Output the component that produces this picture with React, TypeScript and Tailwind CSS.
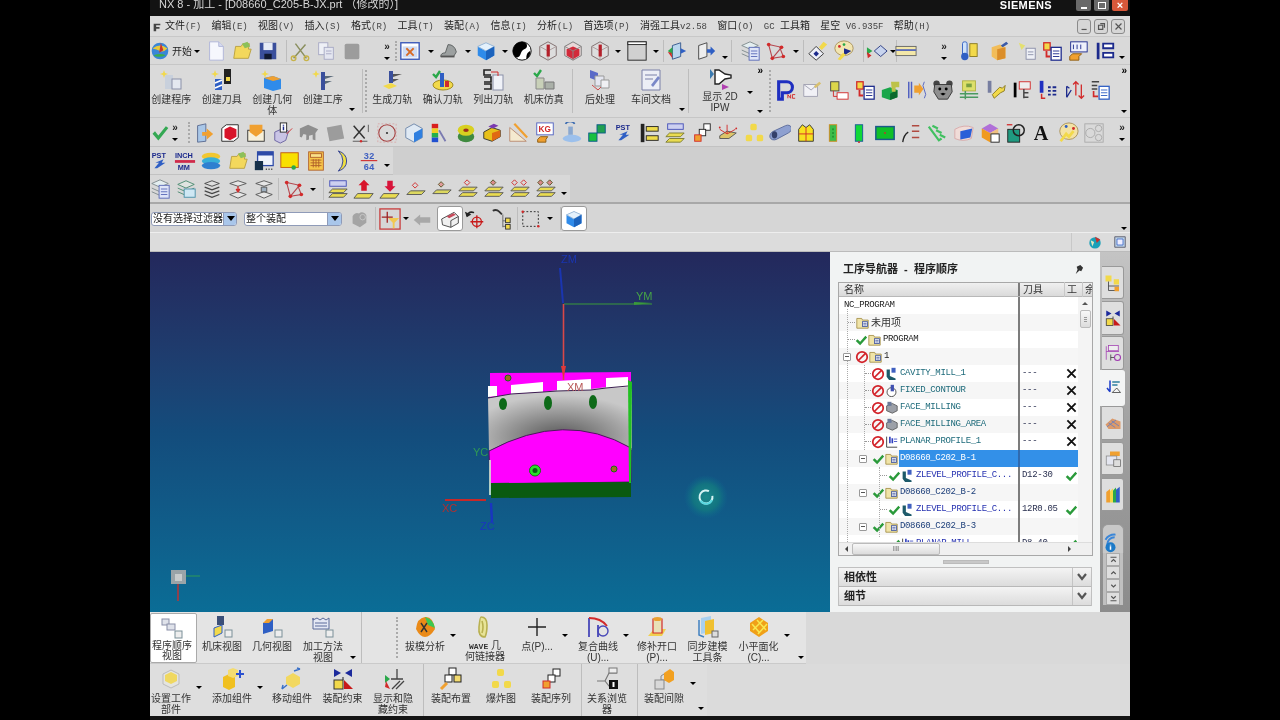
import type { ReactNode } from "react";

const Y = "#f2d94a";
const O = "#f0a030";
const R = "#d22a2a";
const B = "#2f5fc4";
const N = "#1c2a8c";
const G = "#2aa84a";

const icons: Record<string, ReactNode> = {
  ball: (<><circle cx="12" cy="12" r="10" fill="#3a86d8" /><path d="M3 9q9-7 18 0-5 5-9 3-4-2-9-3" fill="#e8c93a" /><path d="M4 17q6 4 15 0-6-3-15 0" fill="#3fae49" /><path d="M13 2l3 9-5 3" fill="#c8342c" /></>),
  doc: (<><path d="M5 2h10l5 5v15H5z" fill="#f6f7fd" stroke="#aeb4d8" /><path d="M15 2v5h5" fill="#d8dcf0" stroke="#aeb4d8" /></>),
  folder: (<><path d="M3 20l2-13h6l2-3h7l-1 6 3 0-3 10z" fill="#f3d85c" stroke="#b9a040" /><path d="M12 4l6-2 3 5-6 2z" fill="#8cc05a" /></>),
  save: (<><rect x="3" y="3" width="18" height="18" fill="#3a4f9c" /><rect x="7" y="3" width="10" height="8" fill="#e6ebf6" /><rect x="8" y="15" width="8" height="6" fill="#101830" /></>),
  scissors: (<><path d="M5 20L18 5M19 20L7 4" stroke="#8a8f5e" strokeWidth="1.6" fill="none" /><circle cx="5" cy="20" r="2.5" fill="none" stroke="#c7b34a" strokeWidth="1.5" /><circle cx="19" cy="20" r="2.5" fill="none" stroke="#c7b34a" strokeWidth="1.5" /></>),
  copy: (<><rect x="4" y="3" width="10" height="13" fill="#eef0f6" stroke="#a7a9c4" /><rect x="10" y="8" width="10" height="13" fill="#e4e6f0" stroke="#a7a9c4" /><path d="M12 12h6M12 15h6" stroke="#a7a9c4" /></>),
  paste: <rect x="4" y="4" width="16" height="17" rx="2" fill="#9c9c9c" />,
  frame: (<><rect x="2" y="3" width="20" height="18" fill="#fff" stroke="#3a58b8" strokeWidth="1.5" /><rect x="4" y="7" width="16" height="12" fill="#cfdcf4" /><path d="M8 9l8 8M16 9l-8 8" stroke="#d86a24" strokeWidth="2" /></>),
  press: (<><path d="M3 18q0-4 5-4l3-9q7 0 9 8l-3 5z" fill="#9ca0a0" stroke="#5b5f5f" /><path d="M3 18h15" stroke="#555" strokeWidth="2" /></>),
  cube: (<><path d="M12 3l9 4v10l-9 5-9-5V7z" fill="#2f8bea" /><path d="M3 7l9-4 9 4-9 5z" fill="#e4f1fc" stroke="#9cb8d4" /><path d="M12 12v10l9-5V7z" fill="#1c63bd" /></>),
  yin: (<><circle cx="12" cy="12" r="10" fill="#fff" stroke="#000" /><path d="M12 2a10 10 0 0 0-7 17c5 1 5-4 7-7s7-2 5-8a10 10 0 0 0-5-2" fill="#000" /><path d="M17 21a10 10 0 0 0 4-9c-3 1-5 5-4 9" fill="#000" /></>),
  hexRed: (<><path d="M12 2l9 5v10l-9 5-9-5V7z" fill="#ddd" stroke="#7c6a6a" /><path d="M3 7l9 5 9-5M12 12v10" fill="none" stroke="#a99" /><rect x="10.5" y="5" width="3.5" height="13" fill="#b3202a" /></>),
  hexRed2: (<><path d="M12 2l9 5v10l-9 5-9-5V7z" fill="#e8d8d8" stroke="#777" /><path d="M5 10l7-3 7 3v7l-7 4-7-4z" fill="#d22a3a" /><path d="M3 7l9 5 9-5M12 12v10" fill="none" stroke="#888" /></>),
  grayRect: (<><rect x="2" y="2" width="20" height="20" fill="#d0d0d0" stroke="#222" /><rect x="2" y="2" width="20" height="3" fill="#fff" stroke="#222" /></>),
  arrowBox: (<><path d="M7 6l9-3v15l-9 3z" fill="#b9d6ee" stroke="#33568c" /><path d="M2 12l5-4v8z" fill="#2aa84a" /><path d="M2 13l5 7-1-6z" fill={R} /><path d="M16 9l6 3-6 3z" fill={B} /></>),
  arrowBox2: (<><path d="M4 6l9-3v15l-9 3z" fill="#eee" stroke="#444" /><path d="M13 10h4v-3l5 5-5 5v-3h-4z" fill={B} /></>),
  layers: (<><path d="M3 6l9-4 9 4-9 4z" fill="#e4eef0" stroke="#7f8a8c" /><path d="M3 11l9 4 9-4M3 15l9 4 9-4" fill="none" stroke="#7f8a8c" /><rect x="11" y="8" width="11" height="14" fill="#dfe5f8" stroke="#5a6ab8" /><path d="M13 12h7M13 15h7M13 18h7" stroke="#5a6ab8" /></>),
  net: (<><path d="M4 5l14 3-10 12 12-2-4-10M4 5l4 15" fill="none" stroke="#b5474f" strokeWidth="1.2" /><circle cx="4" cy="5" r="2" fill={R} /><circle cx="18" cy="8" r="2" fill={R} /><circle cx="8" cy="20" r="2" fill={R} /><circle cx="20" cy="18" r="2" fill={R} /></>),
  diamond: (<><path d="M2 15l8-8 8 8-8 7z" fill="#eef0f8" stroke="#333" /><path d="M7 15l3-3 3 3-3 3z" fill={N} /><path d="M13 8l5-6 4 3-6 6z" fill={Y} /></>),
  palette: (<><ellipse cx="12" cy="9" rx="10" ry="8" fill="#f2e5b0" stroke="#a9905a" /><circle cx="7" cy="7" r="1.5" fill={R} /><circle cx="12" cy="5" r="1.5" fill={G} /><path d="M12 9l8 3-8 5z" fill={N} /><path d="M5 21l6-7 3 2-6 6z" fill={Y} /></>),
  arrowDia: (<><path d="M9 12l7-6 7 6-7 6z" fill="#c8d4ee" stroke="#2a3a80" /><path d="M1 8l6 4-6 4z" fill={G} /><path d="M1 13l5 4-4 3z" fill={R} /></>),
  ruler: (<><rect x="1" y="7" width="22" height="10" fill="#f3e7a8" stroke="#666" /><path d="M1 11h22" stroke="#5a6ab8" strokeWidth="2" /></>),
  therm: (<><rect x="6" y="2" width="5" height="16" rx="2" fill="#cfe2f8" stroke={B} /><circle cx="8.5" cy="18" r="4" fill={B} /><rect x="14" y="4" width="8" height="14" fill={Y} stroke="#8a7a20" /></>),
  orangeBox: (<><path d="M4 8l9-3 6 3v12l-9 2-6-4z" fill="#f2bd5a" /><path d="M10 10l9-2v12l-9 2z" fill="#db8e2a" /><path d="M14 6l6-4 2 2-6 4z" fill="#3a5aa8" /></>),
  lamp: (<><path d="M3 3l7 3-4 5z" fill="#e4e070" /><rect x="11" y="9" width="10" height="12" fill="#eef0f6" stroke="#8a8fa8" /><path d="M13 13h6M13 16h6" stroke="#8a8fa8" /></>),
  listRed: (<><rect x="3" y="3" width="7" height="8" fill={Y} stroke={R} strokeWidth="1.4" /><rect x="11" y="8" width="11" height="14" fill="#fff" stroke={N} strokeWidth="1.4" /><path d="M13 12h7M13 15h7M13 18h7" stroke={N} /><path d="M6 12v6h4" fill="none" stroke={R} strokeWidth="2" /></>),
  fit: (<><rect x="4" y="2" width="18" height="11" fill="#eef0fb" stroke={N} /><path d="M7 5v5M11 5v5M15 5v5" stroke={N} /><path d="M3 18l3-3h10l-3 3v4H3z" fill={O} stroke="#8a5a10" /></>),
  listBlue: (<><path d="M3 3h3v18H3z" fill={N} /><path d="M10 4h11v5H10zM10 14h11v5H10z" fill="#fff" stroke={N} strokeWidth="2" /></>),
  P: (<><path d="M4 22V3h9a6 6 0 0 1 0 12H8v7z" fill="none" stroke="#1f2fc0" strokeWidth="3.4" /><path d="M14 21v-4l3 4v-4M22 17h-3v4h3" fill="none" stroke={R} /></>),
  mail: (<><path d="M3 6h15v13H3z" fill="#f1f1f6" stroke="#a0a0b0" /><path d="M3 6l8 6 7-6" fill="none" stroke="#a0a0b0" /><path d="M14 8l6-5 2 2-6 5z" fill="#d8c070" /></>),
  folderList: (<><rect x="4" y="3" width="9" height="10" fill="#dcd64a" stroke="#444" /><path d="M7 13v6h4" fill="none" stroke={R} /><rect x="11" y="15" width="12" height="7" fill="#fff" stroke={R} /></>),
  greenBox: (<><path d="M2 12l9-3 8 3v8l-8 3-9-3z" fill="#19a64a" /><path d="M11 16l8-4v8l-8 3z" fill="#0b6a2c" /><path d="M12 3h9v6h-4v5h-4z" fill="#bdc24a" /></>),
  bars: (<><path d="M3 3v18M6 3v18" stroke="#5060c0" strokeWidth="1.6" /><path d="M9 7h5v-3l5 7-5 7v-3H9z" fill={O} /><path d="M20 3q-3 4 0 9t0 9" fill="none" stroke="#5060c0" /></>),
  bear: (<><circle cx="5" cy="5" r="3.5" fill="#444" /><circle cx="19" cy="5" r="3.5" fill="#444" /><path d="M3 6h18l1 8-5 8H7l-5-8z" fill="#8f8f8f" stroke="#333" /><circle cx="8.5" cy="11" r="1.6" fill="#000" /><circle cx="15.5" cy="11" r="1.6" fill="#000" /><path d="M9 16l3 2 3-2-3-1z" fill="#000" /></>),
  yellowNet: (<><rect x="5" y="2" width="14" height="11" fill="#dde06a" stroke="#b0b040" /><rect x="9" y="5" width="6" height="4" fill="#7aa040" /><path d="M2 16h20M2 20h20M8 13v9" stroke="#4a9a60" strokeWidth="1.6" /></>),
  wrench: (<><rect x="3" y="2" width="4" height="13" fill="#777ea0" /><path d="M8 17l8-8 3 1 3-3-1 6-4 2-7 6z" fill={Y} stroke="#8a7a20" /></>),
  tree: (<><rect x="3" y="4" width="3" height="16" fill="#000" /><rect x="9" y="3" width="12" height="8" fill="#eee" stroke={R} /><path d="M14 11v10M14 15h5M14 20h5" stroke="#444" strokeWidth="1.6" /></>),
  barsB: (<><rect x="3" y="2" width="4" height="13" fill="#1f2fc0" /><path d="M5 16v5h4" fill="none" stroke={R} strokeWidth="1.6" /><path d="M12 9h3M17 9h4M12 13h3M17 13h4M12 17h3M17 17h4" stroke="#1c2a8c" strokeWidth="2" /></>),
  updown: (<><path d="M4 20l5-8M4 20V8M4 8l3 2" fill="none" stroke={N} strokeWidth="1.4" /><path d="M14 3v15M11 6l3-3 3 3M20 21V6M17 18l3 3 3-3" fill="none" stroke={R} strokeWidth="1.4" /></>),
  listRed2: (<><path d="M3 3h8M3 7h6M3 11h6" stroke="#444" strokeWidth="1.6" /><path d="M5 13v6h5" fill="none" stroke={R} strokeWidth="1.8" /><rect x="11" y="8" width="11" height="14" fill="#fff" stroke={B} strokeWidth="1.4" /><path d="M13 12h7M13 15h7M13 18h7" stroke={B} /></>),
  check: <path d="M3 13l3-3 4 5 9-11 3 2-12 15z" fill="#34a853" />,
  door: (<><path d="M5 4l9-2v19l-9 1z" fill="#a9c7e8" stroke="#5a6a90" /><path d="M10 11h5V7l7 6-7 6v-4h-5z" fill={O} /></>),
  redBox: (<><path d="M3 7l5-4h13v14l-5 4H3z" fill="#fff" stroke="#222" /><path d="M6 8l6-3 7 3v8l-7 4-6-3z" fill="#d8142a" /></>),
  tray: (<><rect x="3" y="9" width="18" height="12" fill="#f7f0da" stroke="#333" /><path d="M5 3h14v8l-7 5-7-5z" fill={O} /></>),
  info: (<><path d="M3 11l9-4 6 3-3 10-6 3-6-3z" fill="#c9c4e6" stroke="#6860a0" /><rect x="9" y="1" width="7" height="10" fill="#fff" stroke="#222" /><path d="M12.5 3v1M12.5 5v4" stroke={N} strokeWidth="1.6" /><path d="M16 13l6-6" stroke={R} /></>),
  grayT: <path d="M2 7l9-4 11 5-3 4v8l-3-1v-5l-4 1v4l-3 1v-6l-3-1-2 4-2-1z" fill="#8e8e8e" />,
  grayS: <path d="M3 6l16-3 3 15-16 3z" fill="#9c9c9c" />,
  xdim: (<><path d="M4 4l12 14M16 4L4 18" stroke="#333" strokeWidth="1.6" /><path d="M3 21h16M20 3v8" stroke="#555" /><circle cx="12" cy="21" r="1.3" fill={R} /></>),
  circle: (<><circle cx="12" cy="12" r="9" fill="none" stroke="#a33a3a" strokeWidth="1.2" /><circle cx="12" cy="12" r="1.2" fill="#333" /><path d="M2 2h20v20H2z" fill="none" stroke="#d8a8a8" strokeDasharray="2 2" /></>),
  wire: (<><path d="M12 2l9 5v10l-9 5-9-5V7z" fill="#dfe9f4" stroke="#6c86a8" /><path d="M12 12l9-5v10l-9 5z" fill="#2f7fe0" /></>),
  rainbow: (<><rect x="3" y="2" width="7" height="5" fill="#d81e1e" /><rect x="3" y="7" width="7" height="5" fill="#f0d020" /><rect x="3" y="12" width="7" height="5" fill="#25b04a" /><rect x="3" y="17" width="7" height="5" fill="#2050d0" /><path d="M11 9l7 12" stroke="#7a7ab0" strokeWidth="2" /></>),
  ring: (<><ellipse cx="12" cy="16" rx="9" ry="6" fill="#3f8a3f" /><ellipse cx="12" cy="9" rx="9" ry="6" fill="#d8d020" /><ellipse cx="12" cy="9" rx="3" ry="2" fill="#a0301c" /></>),
  blocks: (<><path d="M3 11l9-5 9 3v7l-9 5-9-3z" fill="#e8c018" stroke="#333" /><path d="M12 12l9-3v7l-9 5z" fill="#e06a12" /><path d="M8 5l6-3 5 2-6 3z" fill="#7a3ab0" /></>),
  triangle: (<><path d="M3 21V6l18 15z" fill="#f4ead0" stroke="#b98a70" /><path d="M8 2l14 15" stroke={O} strokeWidth="2.4" /></>),
  kg: (<><rect x="3" y="1" width="18" height="13" fill="#fff" stroke="#5060c0" /><text x="5" y="11" fontSize="9" fontWeight="700" fill={R} fontFamily="'Liberation Sans',sans-serif">KG</text><path d="M4 19l3-3h8l-2 3v3H4z" fill={O} stroke="#8a5a10" /></>),
  bluetool: (<><path d="M6 2a6 6 0 0 1 10 0" fill="none" stroke="#3a6ab0" strokeWidth="1.8" /><rect x="9" y="5" width="5" height="9" fill="#8aa8d0" /><ellipse cx="13" cy="18" rx="10" ry="4" fill="#9cc0ec" /></>),
  greens: (<><rect x="12" y="3" width="9" height="9" fill="#20a050" stroke="#0a5a8a" /><rect x="3" y="12" width="9" height="9" fill="#18c040" stroke="#0a5a8a" /></>),
  pst: (<><text x="4" y="9" fontSize="8" fontWeight="700" fill={N} fontFamily="'Liberation Sans',sans-serif">PST</text><path d="M7 20l5-6H8l9-4-2 4h4l-9 6z" fill={B} /></>),
  barsY: (<><path d="M3 2h4v20H3z" fill="#222" /><rect x="9" y="5" width="13" height="5" fill="#eedb4c" stroke="#222" /><rect x="9" y="15" width="13" height="5" fill="#eedb4c" stroke="#222" /></>),
  nre: (<><rect x="4" y="2" width="17" height="6" fill="#cdd0f0" stroke="#4550b8" /><path d="M6 12h16l-4 4H2zM6 18h16l-4 4H2z" fill="#eadc50" stroke="#7a7a30" /></>),
  seq: (<><rect x="14" y="2" width="7" height="7" fill="#fff" stroke="#222" /><rect x="9" y="8" width="7" height="7" fill="#fff" stroke="#222" /><rect x="4" y="14" width="7" height="7" fill={O} stroke={R} /></>),
  xyz: (<><path d="M3 15l8-5 10 2-8 6H3z" fill="#dcc56a" stroke="#555" /><path d="M11 13V3M11 13L3 8M11 13l9-5" stroke={R} /><circle cx="3" cy="6" r="1" fill={R} /><circle cx="21" cy="7" r="1" fill={R} /></>),
  yellowTri: (<><rect x="8" y="2" width="7" height="7" rx="2" fill={Y} /><rect x="3" y="14" width="7" height="7" rx="2" fill={Y} /><rect x="15" y="14" width="7" height="7" rx="2" fill={Y} /></>),
  pipe: (<><path d="M5 10l13-6a4 5 60 0 1 3 8L8 19a4 5 60 0 1-3-9" fill="#8ea0d0" stroke="#5a6a9a" /><ellipse cx="6" cy="14" rx="3" ry="4" fill="#34406a" /></>),
  mold: (<><path d="M4 21V8l4-5 4 3 4-3 4 5v13z" fill="#f8e020" stroke="#333" /><path d="M4 13h16M12 6v15" stroke={R} /></>),
  pillO: (<><rect x="8" y="3" width="8" height="18" fill="#3dbd4a" stroke="#d08a20" /><path d="M12 7v10" stroke="#0a6a1a" strokeDasharray="2 2" /></>),
  pillB: (<><rect x="8" y="3" width="8" height="18" fill="#10d838" stroke="#1a5a9a" /><circle cx="12" cy="22" r="1" fill={R} /></>),
  greenRect: (<><rect x="2" y="5" width="20" height="14" fill="#10c028" stroke="#1a5a8a" strokeWidth="1.6" /><circle cx="12" cy="12" r="1" fill={R} /></>),
  num: (<><path d="M3 22q1-8 6-11" stroke="#222" fill="none" strokeWidth="1.4" /><path d="M13 4h8M13 10h8M13 17h8" stroke="#b04a40" strokeWidth="1.6" /></>),
  ee: <path d="M3 5l11 15 3-2M7 4l6 3M11 9l6 3M15 14l6 3" fill="none" stroke="#40c060" strokeWidth="2.4" />,
  blueSolid: (<><path d="M2 8q10-6 20-2l-2 12q-9 4-18 0z" fill="#f0dcd8" stroke="#d8a8a8" /><path d="M8 10l13-3-2 10-11 2z" fill="#2a5fd8" /></>),
  colorCube: (<><path d="M12 2l9 5-9 5-9-5z" fill="#b070d8" /><path d="M3 7l9 5v10l-9-5z" fill="#f09a20" /><path d="M12 12l9-5v10l-9 5z" fill="#f0c080" /><rect x="13" y="13" width="9" height="9" fill="#fff" stroke="#222" /></>),
  tealO: (<><rect x="3" y="8" width="13" height="14" fill="#1f9a80" stroke="#222" /><circle cx="15" cy="9" r="6" fill="none" stroke="#222" strokeWidth="1.6" /><path d="M2 3h6" stroke={R} strokeWidth="1.4" /></>),
  A: <text x="3" y="20" fontSize="22" fontWeight="700" fill="#111" fontFamily="'Liberation Serif',serif">A</text>,
  runner: (<><ellipse cx="13" cy="10" rx="10" ry="9" fill="#f3e2a4" stroke="#a9905a" /><circle cx="18" cy="7" r="1.6" fill={R} /><circle cx="10" cy="5" r="1.6" fill={B} /><path d="M4 21l6-8 3 3 5-6" stroke={Y} strokeWidth="3" fill="none" /></>),
  rings: (<><rect x="2" y="2" width="20" height="20" fill="none" stroke="#aaa" /><circle cx="8" cy="12" r="5" fill="none" stroke="#aaa" /><circle cx="17" cy="7" r="3.5" fill="none" stroke="#aaa" /><circle cx="17" cy="17" r="3.5" fill="none" stroke="#aaa" /></>),
  inch: (<><text x="1" y="9" fontSize="8" fontWeight="700" fill={N} fontFamily="'Liberation Sans',sans-serif">INCH</text><rect x="1" y="11" width="22" height="3" fill="#d02a4a" /><text x="4" y="22" fontSize="8" fontWeight="700" fill={N} fontFamily="'Liberation Sans',sans-serif">MM</text></>),
  layersC: (<><ellipse cx="12" cy="7" rx="10" ry="4" fill="#f2c730" /><ellipse cx="12" cy="12" rx="10" ry="4" fill="#38b0d8" /><ellipse cx="12" cy="17" rx="10" ry="4" fill="#2f80d0" /></>),
  win: (<><rect x="5" y="2" width="17" height="15" fill="#f0f4fc" stroke="#2d4aa8" strokeWidth="1.4" /><rect x="5" y="2" width="17" height="4" fill="#2d4aa8" /><rect x="2" y="12" width="9" height="10" fill="#16304a" /><path d="M14 21h1M17 21h1M20 21h1" stroke="#222" strokeWidth="1.5" /></>),
  yellowSq: (<><rect x="2" y="3" width="19" height="16" fill="#f8e000" stroke="#c05a10" /><circle cx="16" cy="19" r="2.5" fill={G} /></>),
  calc: (<><rect x="4" y="2" width="16" height="20" fill="#f7c64a" stroke="#b0602a" /><rect x="6" y="4" width="12" height="4" fill="#f9e08a" stroke="#b0602a" /><path d="M6 11h12M6 14h12M6 17h12M9 10v9M12 10v9M15 10v9" stroke="#b0602a" /></>),
  moon: <path d="M8 1q9 3 9 11t-9 11q5-5 5-11T8 1z" fill="#f0e040" stroke="#2a3a90" />,
  frac: (<><text x="6" y="10" fontSize="10" fontWeight="700" fill="#4060c0" fontFamily="'Liberation Mono',monospace">32</text><rect x="3" y="11" width="18" height="1.2" fill={R} /><text x="6" y="22" fontSize="10" fontWeight="700" fill="#4060c0" fontFamily="'Liberation Mono',monospace">64</text></>),
  layerDoc: (<><path d="M3 7l9-4 9 4-9 4z" fill="#e0e4e0" stroke="#4a8a70" /><path d="M3 11l9 4 9-4M3 15l9 4 9-4" fill="none" stroke="#4a8a70" /><rect x="10" y="12" width="12" height="9" fill="#cfe8f4" stroke="#4a90a8" /></>),
  layerDark: (<><path d="M4 6l8-3 8 3-8 3z" fill="#ddd" stroke="#444" /><path d="M4 10l8 3 8-3M4 14l8 3 8-3M4 18l8 3 8-3" fill="none" stroke="#444" strokeWidth="1.3" /></>),
  hourglass: (<><path d="M3 6l9-3 9 3-9 3zM3 18l9-3 9 3-9 4z" fill="#e6e6e6" stroke="#555" /><path d="M12 9v4M10 12l2 3 2-3" stroke={R} strokeWidth="1.5" fill="none" /></>),
  hourglass2: (<><path d="M3 6l9-3 9 3-9 3zM3 18l9-3 9 3-9 4z" fill="#e6e6e6" stroke="#555" /><path d="M9 10h6v5H9z" fill="#9fb0c0" stroke="#555" /></>),
  mce: (<><rect x="3" y="3" width="18" height="6" fill="#cdd0f0" stroke="#4550b8" /><path d="M6 12h16l-4 4H2zM6 17h16l-4 4H2z" fill="#eadc50" stroke="#555" /></>),
  upLayer: (<><path d="M12 2l6 6h-3v6H9V8H6z" fill="#d8142a" /><path d="M5 17h17l-4 5H1z" fill="#eadc50" stroke="#555" /></>),
  downLayer: (<><path d="M12 15l6-6h-3V3H9v6H6z" fill="#d8143a" /><path d="M5 17h17l-4 5H1z" fill="#eadc50" stroke="#555" /></>),
  oneLayer: (<><path d="M11 5l3 3-3 3-3-3z" fill="none" stroke={R} /><path d="M6 14h16l-4 4H2z" fill="#dcd860" stroke="#555" /></>),
  oneLayer2: (<><path d="M11 4l3 3-3 3-3-3z" fill="#e09a9a" stroke="#552" /><path d="M6 13h16l-4 4H2z" fill="#dcd860" stroke="#555" /></>),
  twoLayer: (<><path d="M11 2l3 3-3 3-3-3z" fill="none" stroke={R} /><path d="M6 10h16l-4 4H2zM6 16h16l-4 4H2z" fill="#eadc50" stroke="#555" /></>),
  twoLayer2: (<><path d="M11 2l3 3-3 3-3-3z" fill="#d88a8a" stroke="#552" /><path d="M6 10h16l-4 4H2zM6 16h16l-4 4H2z" fill="#eadc50" stroke="#555" /></>),
  twoTwo: (<><path d="M6 2l3 3-3 3-3-3zM16 2l3 3-3 3-3-3z" fill="none" stroke={R} /><path d="M6 10h16l-4 4H2zM6 16h16l-4 4H2z" fill="#eadc50" stroke="#555" /></>),
  twoTwo2: (<><path d="M6 2l3 3-3 3-3-3zM16 2l3 3-3 3-3-3z" fill="#d88a8a" stroke="#552" /><path d="M6 10h16l-4 4H2zM6 16h16l-4 4H2z" fill="#eadc50" stroke="#555" /></>),
  hand: (<><path d="M5 9a5 5 0 0 1 7-3 5 5 0 0 1 8 2v8l-7 5-8-4z" fill="#a4a4a4" /><circle cx="16" cy="10" r="3" fill="none" stroke="#c8c8c8" /></>),
  filter: (<><rect x="1" y="1" width="22" height="22" fill="none" stroke="#c83a3a" strokeWidth="1.4" /><path d="M9 4v12M3 10h12" stroke="#a02020" strokeWidth="1.4" /><path d="M10 11h12l-5 5v6h-2v-6z" fill="#f2c850" /></>),
  back: <path d="M3 13l7-6v3h11v6H10v3z" fill="#a8a8a8" />,
  printer: (<><path d="M2 12l15-8 5 5v8l-9 5-10-3z" fill="#f0f0f0" stroke="#333" /><path d="M8 9l8-4 3 2-8 4z" fill="#c84a5a" /><path d="M13 22V14l9-5" stroke="#333" fill="none" /></>),
  undoTarget: (<><path d="M3 9q2-6 8-4" fill="none" stroke="#222" strokeWidth="1.6" /><path d="M1 4l2 6 5-3z" fill="#222" /><circle cx="14" cy="15" r="5" fill="none" stroke="#c81a1a" strokeWidth="1.4" /><path d="M14 8v14M7 15h14" stroke="#c81a1a" strokeWidth="1.4" /></>),
  chain: (<><path d="M3 3q4-2 7 1l3 3" fill="none" stroke="#333" strokeWidth="2" /><path d="M14 7v14M14 14h5M14 20h5" stroke="#666" /><rect x="17" y="11" width="5" height="5" fill={Y} stroke="#333" /><rect x="17" y="18" width="5" height="5" fill={Y} stroke="#333" /></>),
  dashedRect: (<><rect x="3" y="4" width="17" height="16" fill="none" stroke="#222" strokeDasharray="2 2" /><circle cx="3" cy="4" r="1.4" fill={R} /><circle cx="20" cy="20" r="1.4" fill={R} /></>),
  prog: (<><rect x="2" y="3" width="7" height="6" fill="#dfe2ea" stroke="#8a8fa8" /><rect x="7" y="8" width="8" height="6" fill="#dfe2ea" stroke="#8a8fa8" /><rect x="15" y="15" width="7" height="7" fill="#eee" stroke="#7a8f98" /></>),
  machine: (<><rect x="7" y="1" width="7" height="9" fill="#3b4f78" /><path d="M4 13l8-3v8l-8 4z" fill={Y} stroke={B} /><rect x="15" y="15" width="7" height="7" fill="#eee" stroke="#7a8f98" /></>),
  geo: (<><path d="M3 8l10-4v12l-10 3z" fill={B} /><path d="M3 8l4-4h6l-4 4z" fill={O} /><rect x="15" y="15" width="7" height="7" fill="#eee" stroke="#7a8f98" /></>),
  method: (<><path d="M2 3v11h16V3l-3 2-3-2-3 2-3-2-4 2z" fill="#e4e8f4" stroke="#5a6a9a" /><path d="M4 8h12M4 11h12" stroke="#5a6a9a" /><rect x="15" y="15" width="7" height="7" fill="#eee" stroke="#7a8f98" /></>),
  crProg: (<><path d="M5 2l1 3 3 1-3 1-1 3-1-3-3-1 3-1z" fill={Y} /><rect x="6" y="7" width="8" height="14" fill="#c8d0dc" /><rect x="13" y="11" width="9" height="10" fill="#e4e8f0" stroke="#8a90a8" /></>),
  crTool: (<><path d="M5 2l1 3 3 1-3 1-1 3-1-3-3-1 3-1z" fill={Y} /><path d="M5 11h7v11H5z" fill={B} /><path d="M5 15l7-3M5 20l7-3" stroke="#fff" strokeWidth="1.6" /><rect x="14" y="1" width="7" height="15" fill="#222" /><rect x="16" y="9" width="4" height="4" fill={Y} /></>),
  crGeo: (<><path d="M5 2l1 3 3 1-3 1-1 3-1-3-3-1 3-1z" fill={Y} /><path d="M4 10l9-2 8 3v10l-8 2-9-3z" fill="#2f8bea" /><path d="M4 10l9-2 8 3-8 2z" fill={O} /></>),
  crOp: (<><path d="M5 2l1 3 3 1-3 1-1 3-1-3-3-1 3-1z" fill={Y} /><path d="M10 4h4v18h-4z" fill="#3a4f9c" /><path d="M14 8h9l-9 3zM14 13h7l-7 3z" fill="#5a6a7a" /></>),
  genPath: (<><path d="M9 3h4v12H9z" fill="#3a4f9c" /><path d="M13 6h9l-9 3zM13 11h6l-6 3z" fill="#555" /><path d="M3 18l8-3 6 3-8 3z" fill={Y} /></>),
  verPath: (<><path d="M2 6l3 3 4-6" fill="none" stroke={G} strokeWidth="2.4" /><ellipse cx="12" cy="17" rx="10" ry="5" fill={Y} stroke="#a08a20" /><rect x="9" y="5" width="4" height="14" fill={B} /><rect x="14" y="13" width="4" height="6" fill={R} /></>),
  listPath: (<><path d="M10 2H3v5h7M3 9h7v5H3M3 16h7v5H3" fill="none" stroke="#222" strokeWidth="1.6" /><rect x="12" y="7" width="10" height="15" fill="#f0f2f8" stroke="#8a90a8" /><path d="M10 4h7v4" fill="none" stroke={R} /></>),
  sim: (<><path d="M2 5l3 3 4-6" fill="none" stroke={G} strokeWidth="2.4" /><path d="M4 10h8v11H4z" fill="#c8d0b8" stroke="#888" /><path d="M13 14h9v7h-9z" fill="#aab0a8" stroke="#777" /></>),
  post: (<><path d="M2 2l8 3v8l-8-3z" fill="#5a6ac8" /><path d="M7 8h9v10H7z" fill="#e4e6f0" stroke="#999" /><path d="M13 12h8v8h-8z" fill="#f0f0f4" stroke="#999" /><path d="M4 17l6 5 3-3" stroke="#c84a4a" fill="none" /></>),
  shopDoc: (<><path d="M3 2h18v20H3z" fill="#eceef6" stroke="#7a80a8" /><path d="M6 7h12M6 11h8" stroke="#7a80a8" /><path d="M12 17l7-9 2 2-7 9z" fill="#7a88c8" /></>),
  ipw: (<><path d="M2 2l4 5-4 5z" fill="#3a7ab0" /><path d="M7 3h4l6 4 6 1v3l-6 1-6 5H7z" fill="#fff" stroke="#222" strokeWidth="1.4" /><path d="M14 17l7 3-7 3z" fill="#b040b0" /></>),
  draft: (<><path d="M3 14Q4 3 12 2t10 12q-5 8-10 8T3 14" fill="#ea8a18" /><path d="M12 2q8 2 10 11l-7-3z" fill="#3cc850" /><path d="M8 8l6 9M14 8l-6 9" stroke="#333" strokeWidth="1.4" /></>),
  waveLink: <path d="M8 2q6 0 6 8t-2 12q-7 0-6-10t2-10M9 6q2 6 0 12" fill="#e8e498" stroke="#b8b050" strokeWidth="1.6" />,
  plus: <path d="M12 3v18M3 12h18" stroke="#222" strokeWidth="1.4" />,
  curve: (<><path d="M3 22V3M12 22V10" stroke="#4848b8" strokeWidth="1.8" /><path d="M3 3q12 0 18 8" fill="none" stroke={R} strokeWidth="1.8" /><circle cx="17" cy="16" r="5" fill="none" stroke="#4848b8" strokeWidth="1.4" /></>),
  patch: (<><path d="M3 21l6-7h12l-4 7z" fill="#f0d050" /><path d="M8 4h9v14H8z" fill="#e8e0b8" stroke={R} strokeWidth="1.2" /><ellipse cx="12.5" cy="4" rx="4.5" ry="2" fill="#e8a030" /></>),
  sync: (<><path d="M5 3l10-2v16l-10 2z" fill="#a8d0f0" /><path d="M9 6l9-2v14l-9 2z" fill="#f0c030" /><path d="M3 5v15l5 2" stroke="#4080c0" fill="none" strokeWidth="1.5" /><rect x="16" y="16" width="6" height="6" fill="#ddd" stroke="#666" /></>),
  facet: (<><path d="M3 8l9-6 9 6v8l-9 6-9-6z" fill="#f0a018" /><path d="M5 9l7 8M10 5l9 10M6 15l10-10M11 19l9-10" stroke="#f8e850" strokeWidth="1.5" /></>),
  setWork: (<><path d="M4 7l8-4 8 4v10l-8 4-8-4z" fill="#e4e4e0" stroke="#bbb" /><path d="M6 8l6-3 6 3v6l-6 3-6-3z" fill="#f0d860" /></>),
  addComp: (<><path d="M3 10l6-3 6 3v10l-6 3-6-3z" fill="#f0c020" /><path d="M8 3l5-2 5 2v6l-5 2-5-2z" fill="#f4dc70" /><path d="M20 3v8M16 7h8" stroke="#2a50d0" strokeWidth="2" /></>),
  moveComp: (<><path d="M6 10l7-4 7 4v7l-7 4-7-4z" fill="#f2d860" /><path d="M14 4l6-2M20 2l-3-1M2 22l5-4M2 22l1-4" stroke="#3a70c8" strokeWidth="1.5" fill="none" /></>),
  constrain: (<><path d="M3 2l7 4-7 4zM21 2l-7 4 7 4z" fill="#1c2a9c" /><path d="M12 10v3" stroke="#222" /><rect x="3" y="13" width="9" height="9" fill={Y} stroke="#333" /><path d="M13 22V13l9 9z" fill="#c81a1a" /></>),
  showHide: (<><path d="M4 8l5 4-5 4z" fill={G} /><path d="M5 14l4 8-5-2z" fill={R} /><path d="M10 12h12M16 2v10M11 22l8-8M15 22l8-8" stroke="#444" strokeWidth="1.3" /></>),
  layout: (<><rect x="10" y="1" width="7" height="7" fill="#fff" stroke="#222" /><rect x="6" y="8" width="7" height="7" fill="#fff" stroke="#222" /><rect x="15" y="8" width="7" height="7" fill="#f4dc70" stroke="#222" /><path d="M2 22l6-6" stroke={O} strokeWidth="3" /></>),
  browser: (<><path d="M2 14h8l4-8h8M10 14l4 5h2" fill="none" stroke="#777" strokeWidth="1.2" /><rect x="14" y="1" width="8" height="5" fill="#eee" stroke="#777" /><rect x="14" y="13" width="9" height="9" fill="#111" /><rect x="17.5" y="15" width="2" height="5" fill="#fff" /></>),
  clear: (<><path d="M9 9l3-2 3 2v4H9z" fill="#ddd" stroke="#888" /><rect x="3" y="13" width="9" height="9" fill="#d8d8d8" stroke="#888" /><path d="M12 6l6-4 4 3v8l-5 3-5-3z" fill="#f2a020" /></>),
  tabComp: (<><rect x="2" y="2" width="8" height="8" fill={Y} /><rect x="13" y="7" width="7" height="7" fill={Y} /><path d="M6 10v12M6 16h14M6 22h12" stroke="#333" /><rect x="14" y="17" width="6" height="6" fill={O} /></>),
  tabFolder: (<><path d="M3 3v18M3 10h17" stroke="#a03ab0" /><rect x="6" y="2" width="13" height="7" fill="#eee" stroke="#a03ab0" /><path d="M9 14v8M9 18h5" stroke="#333" /><circle cx="18" cy="18" r="4" fill="none" stroke="#a03ab0" strokeWidth="1.4" /></>),
  tabOps: (<><path d="M8 2v15M4 12l4 5" stroke="#1c3cc8" strokeWidth="2" fill="none" /><path d="M11 4h10M11 8h7" stroke="#2f7f9f" strokeWidth="2" /><path d="M11 18h11l-5-6z" fill="none" stroke="#333" /></>),
  tabGrid: (<><path d="M2 14l9-8 11 4v10H6z" fill="#dc9a6a" /><path d="M6 12l9 6M10 9l10 7M4 17l12-9" stroke="#5a7ac8" /></>),
  tabDoc: (<><path d="M8 2h13v6H8z" fill={O} /><rect x="3" y="8" width="14" height="12" fill="#e4e6f0" stroke="#888" /><rect x="13" y="13" width="9" height="9" fill="#ddd" stroke="#666" /></>),
  tabBooks: (<><path d="M3 8l5-4v18H3z" fill={O} /><path d="M8 7l4-4v19H8z" fill={Y} /><path d="M12 6l4-4v20h-4z" fill={G} /><path d="M16 5l5-4v21h-5z" fill={B} /></>),
  tabFeed: (<><path d="M5 14a9 9 0 0 1 9-9M3 8a13 13 0 0 1 12-6" stroke="#3a86d8" strokeWidth="2.4" fill="none" /><circle cx="9" cy="17" r="6" fill="#1c7ac8" /><path d="M9 14v1M9 16v4" stroke="#fff" strokeWidth="1.8" /></>),
};

function Ico({ k, className = "w-[22px] h-[22px]" }: { k: string; className?: string }) {
  return (
    <svg viewBox="0 0 24 24" className={className}>
      {icons[k]}
    </svg>
  );
}

function Slot({ k, className = "w-[26px]", size }: { k: string; className?: string; size?: string }) {
  return (
    <div className={`shrink-0 flex items-center justify-center ${className}`}>
      <Ico k={k} className={size} />
    </div>
  );
}

function Caret({ className = "" }: { className?: string }) {
  return <span className={`w-0 h-0 shrink-0 border-x-[3px] border-t-[3px] border-x-transparent border-t-black ${className}`} />;
}

function Chev() {
  return (
    <div className="shrink-0 w-[10px] h-full flex flex-col items-center justify-center gap-[6px]">
      <span className="text-[10px] leading-[8px] font-bold text-[#222]">»</span>
      <Caret />
    </div>
  );
}

function Grip({ className = "" }: { className?: string }) {
  return <div className={`shrink-0 h-[80%] border-l-2 border-dotted border-[#aaa] ${className}`} />;
}

function Sep({ className = "" }: { className?: string }) {
  return <div className={`shrink-0 w-px h-[85%] bg-[#bdbdbd] ${className}`} />;
}

function Big({ k, lines, className = "w-[50px]", caret }: { k: string; lines: string[]; className?: string; caret?: boolean }) {
  return (
    <div className={`shrink-0 relative flex flex-col items-center h-full pt-[3px] ${className}`}>
      <Ico k={k} className="w-[24px] h-[24px]" />
      <div className="mt-[2px] text-[10px] leading-[11px] text-center text-[#333] whitespace-nowrap">
        {lines.map((l) => (
          <div key={l}>{l}</div>
        ))}
      </div>
      {caret && <Caret className="absolute right-[-6px] top-[22px]" />}
    </div>
  );
}

const menus = [
  ["文件", "(F)", ""],
  ["编辑", "(E)", ""],
  ["视图", "(V)", ""],
  ["插入", "(S)", ""],
  ["格式", "(R)", ""],
  ["工具", "(T)", ""],
  ["装配", "(A)", ""],
  ["信息", "(I)", ""],
  ["分析", "(L)", ""],
  ["首选项", "(P)", ""],
  ["消强工具", "v2.58", ""],
  ["窗口", "(O)", ""],
  ["", "GC ", "工具箱"],
  ["星空", " V6.935F", ""],
  ["帮助", "(H)", ""],
];

function MenuBar() {
  return (
    <div className="h-[21px] shrink-0 flex items-center bg-[#dcdcdc] border-b border-[#c8c8c8] pl-[2px] pt-px text-[10px] text-[#222]">
      <svg viewBox="0 0 12 12" className="w-[10px] h-[12px] shrink-0">
        <path d="M2 2h8v2H5v2h4v2H5v3H2z" fill="#444" />
      </svg>
      <div className="flex gap-[10.3px] ml-[3px] whitespace-pre">
        {menus.map(([a, b, c]) => (
          <span key={a + b}>
            {a}
            <span className="font-['Liberation_Mono',monospace] text-[9px] text-[#444]">{b}</span>
            {c}
          </span>
        ))}
      </div>
      <div className="ml-auto mr-[5px] flex gap-[3px]">
        {["M3 10h6", "M3 5h5v5H3zM5 3h5v5", "M3 3l7 7M10 3l-7 7"].map((d) => (
          <div key={d} className="w-[14px] h-[15px] border border-[#8a8a8a] rounded-[3px] bg-[#d6d6d6] flex items-center justify-center">
            <svg viewBox="0 0 13 13" className="w-[11px] h-[11px]">
              <path d={d} fill="none" stroke="#555" strokeWidth="1.4" />
            </svg>
          </div>
        ))}
      </div>
    </div>
  );
}

function Row1() {
  return (
    <div className="h-[28px] shrink-0 flex items-center pt-px bg-[#d9d9d9] border-b border-[#c6c6c6]">
      <Slot k="ball" className="w-[20px]" />
      <div className="w-[33px] shrink-0 flex items-center gap-[2px] text-[10px] text-[#222] pl-[2px]">
        开始
        <Caret />
      </div>
      <Slot k="doc" />
      <Slot k="folder" />
      <Slot k="save" />
      <Sep className="ml-[5px]" />
      <Slot k="scissors" />
      <Slot k="copy" />
      <Slot k="paste" />
      <div className="w-[30px] shrink-0 h-full flex justify-end pr-[3px]">
        <Chev />
      </div>
      <Grip />
      <Slot k="frame" />
      <Caret className="ml-[5px] mr-[2px]" />
      <Slot k="press" />
      <Caret className="ml-[3px] mr-[2px]" />
      <Slot k="cube" />
      <Caret className="ml-[3px] mr-[1px]" />
      <Slot k="yin" />
      <Slot k="hexRed" className="w-[25px]" />
      <Slot k="hexRed2" />
      <Slot k="hexRed" className="w-[26px] ml-[1px]" />
      <Caret className="ml-[2px] mr-[3px]" />
      <Slot k="grayRect" />
      <Caret className="ml-[3px]" />
      <Sep className="ml-[4px]" />
      <Slot k="arrowBox" />
      <Slot k="arrowBox2" className="w-[26px] ml-[3px]" />
      <Caret className="mt-[12px] ml-[3px]" />
      <Sep className="ml-[3px]" />
      <Slot k="layers" className="w-[26px] ml-[5px]" />
      <Slot k="net" />
      <Caret className="ml-[4px]" />
      <Sep className="ml-[4px]" />
      <Slot k="diamond" className="w-[26px] ml-[1px]" />
      <Slot k="palette" />
      <Sep className="ml-[6px]" />
      <Slot k="arrowDia" />
      <Caret />
      <Sep />
      <Slot k="ruler" className="w-[26px] -ml-[4px]" />
      <div className="w-[36px] shrink-0 h-full flex justify-end pr-[6px]">
        <Chev />
      </div>
      <Slot k="therm" />
      <Slot k="orangeBox" className="w-[26px] ml-[5px]" />
      <Slot k="lamp" className="w-[26px] ml-[2px]" />
      <Slot k="listRed" className="w-[26px] -ml-[1px]" />
      <Slot k="fit" />
      <Slot k="listBlue" className="w-[26px] ml-[1px]" />
      <Caret className="mt-[12px] ml-[1px]" />
    </div>
  );
}

const leftBig: [string, string[]][] = [
  ["crProg", ["创建程序"]],
  ["crTool", ["创建刀具"]],
  ["crGeo", ["创建几何", "体"]],
  ["crOp", ["创建工序"]],
];
const midBig: [string, string[]][] = [
  ["genPath", ["生成刀轨"]],
  ["verPath", ["确认刀轨"]],
  ["listPath", ["列出刀轨"]],
  ["sim", ["机床仿真"]],
];
const row2Tools = ["P", "mail", "folderList", "listRed", "greenBox", "bars", "bear", "yellowNet", "wrench", "tree", "barsB", "updown", "listRed2"];

function Row2() {
  return (
    <div className="h-[53px] shrink-0 flex items-center bg-[#dadada] border-b border-[#c6c6c6]">
      <div className="-ml-[4px] flex h-full">
        {leftBig.map(([k, l]) => (
          <Big key={k} k={k} lines={l} className="w-[50.5px]" />
        ))}
      </div>
      <Caret className="ml-[1px] mt-[36px]" />
      <Sep className="ml-[7px]" />
      <Grip className="ml-[2px]" />
      {midBig.map(([k, l]) => (
        <Big key={k} k={k} lines={l} className="w-[50.5px]" />
      ))}
      <Sep className="ml-[3px]" />
      <Big k="post" lines={["后处理"]} className="w-[50px] ml-[2px]" />
      <Big k="shopDoc" lines={["车间文档"]} className="w-[52px]" />
      <Caret className="mt-[36px] ml-[2px]" />
      <Sep className="ml-[3px]" />
      <div className="w-[48px] shrink-0 ml-[7px] h-full">
        <div className="flex justify-center pt-[2px]">
          <Ico k="ipw" className="w-[24px] h-[24px]" />
        </div>
        <div className="text-[10px] leading-[11px] text-center text-[#333] whitespace-nowrap">
          显示 2D
          <br />
          IPW
        </div>
      </div>
      <div className="w-[25px] shrink-0 h-full flex flex-col items-end pt-[2px] pb-[4px] justify-between pr-[6px]">
        <span className="text-[10px] leading-[8px] font-bold">»</span>
        <Caret className="mr-[10px]" />
        <Caret />
      </div>
      <Grip className="mr-[2px]" />
      <div className="flex items-center -mt-[2px]">
        {row2Tools.map((k) => (
          <Slot key={k + "2"} k={k} className="w-[26.2px]" />
        ))}
      </div>
      <div className="ml-auto h-full flex flex-col justify-between items-end pt-[2px] pb-[4px] pr-[3px]">
        <span className="text-[10px] leading-[8px] font-bold">»</span>
        <Caret />
      </div>
    </div>
  );
}

const row3Tools = ["door", "redBox", "tray", "info", "grayT", "grayS", "xdim", "circle", "wire", "rainbow", "ring", "blocks", "triangle", "kg", "bluetool", "greens", "pst", "barsY", "nre", "seq", "xyz", "yellowTri", "pipe", "mold", "pillO", "pillB", "greenRect", "num", "ee", "blueSolid", "colorCube", "tealO", "A", "runner", "rings"];

function Row3() {
  return (
    <div className="h-[29px] shrink-0 flex items-center pt-px bg-[#d9d9d9] border-b border-[#c2c2c2]">
      <Slot k="check" className="w-[20px]" />
      <div className="w-[16px] shrink-0 h-full">
        <Chev />
      </div>
      <Grip className="ml-[2px] mr-[1px]" />
      {row3Tools.map((k) => (
        <Slot key={k} k={k} className="w-[26.2px]" />
      ))}
      <div className="ml-auto pr-[3px] h-full">
        <Chev />
      </div>
    </div>
  );
}

const row4Tools = ["pst", "inch", "layersC", "folder", "win", "yellowSq", "calc", "moon", "frac"];

function Row4() {
  return (
    <div className="h-[28px] shrink-0 flex items-center bg-[#cfcfcf]">
      <div className="w-[243px] h-full shrink-0 flex items-center pt-px bg-[#d9d9d9] border-b border-[#c2c2c2] overflow-hidden">
        <div className="-ml-[4px] flex">
          {row4Tools.map((k) => (
            <Slot key={k + "4"} k={k} className="w-[26.2px]" />
          ))}
        </div>
        <Caret className="mt-[8px] ml-[2px]" />
      </div>
    </div>
  );
}

const row5Tail = ["mce", "upLayer", "downLayer", "oneLayer", "oneLayer2", "twoLayer", "twoLayer2", "twoTwo", "twoTwo2"];

function Row5() {
  return (
    <div className="h-[29px] shrink-0 flex items-center bg-[#cfcfcf] border-b-2 border-[#a8a8a8]">
      <div className="w-[420px] h-full shrink-0 flex items-center pt-px bg-[#d8d8d8] overflow-hidden">
        <div className="-ml-[3px] flex">
          {["layers", "layerDoc", "layerDark", "hourglass", "hourglass2"].map((k) => (
            <Slot key={k + "5"} k={k} />
          ))}
        </div>
        <Sep className="ml-[1px]" />
        <Slot k="net" className="w-[26px] ml-[2px]" />
        <Caret className="ml-[3px]" />
        <Sep className="ml-[7px]" />
        <div className="flex ml-[1px]">
          {row5Tail.map((k) => (
            <Slot key={k + "5"} k={k} />
          ))}
        </div>
        <Caret className="mt-[8px] ml-[2px]" />
      </div>
    </div>
  );
}

function Combo({ label, className }: { label: string; className: string }) {
  return (
    <div className={`shrink-0 h-[14px] flex items-center justify-between border border-[#8f9bb8] rounded-[3px] bg-white text-[10px] leading-[12px] text-[#222] overflow-hidden ${className}`}>
      <span className="whitespace-nowrap pl-[1px]">{label}</span>
      <span className="w-[14px] h-full shrink-0 flex items-center justify-center bg-[#a9c6ea] border-l border-[#8f9bb8]">
        <Caret className="border-x-[4px] border-t-[5px] border-t-[#12234a]" />
      </span>
    </div>
  );
}

function Pressed({ k }: { k: string }) {
  return (
    <div className="w-[26px] h-[25px] shrink-0 flex items-center justify-center bg-white border border-[#9a9a9a] rounded-[3px]">
      <Ico k={k} className="w-[20px] h-[20px]" />
    </div>
  );
}

function Row6() {
  return (
    <div className="h-[28px] shrink-0 flex items-center pt-px bg-[#d6d6d6] overflow-hidden relative">
      <div className="w-[87px] shrink-0 overflow-hidden flex justify-end">
        <Combo label="没有选择过滤器" className="w-[86px]" />
      </div>
      <Combo label="整个装配" className="w-[98px] ml-[7px]" />
      <Slot k="hand" className="w-[26px] ml-[4px]" />
      <Sep className="ml-[3px]" />
      <Slot k="filter" className="w-[26px] ml-[1px]" />
      <Caret />
      <Slot k="back" className="w-[24px] ml-[1px]" />
      <div className="ml-[3px]">
        <Pressed k="printer" />
      </div>
      <Slot k="undoTarget" className="w-[26px] -ml-[1px]" />
      <Slot k="chain" />
      <Sep className="ml-[3px]" />
      <Slot k="dashedRect" className="w-[26px]" />
      <Caret className="ml-[3px]" />
      <Sep className="ml-[7px]" />
      <Pressed k="cube" />
      <Caret className="absolute right-[3px] bottom-[2px]" />
    </div>
  );
}

function Status() {
  return (
    <div className="h-[20px] shrink-0 flex items-center justify-end bg-[#dcdcdc] border-t border-[#eeeeee] border-b border-b-[#bbb] pr-[4px]">
      <div className="h-full w-px bg-[#c8c8c8] mr-[16px]" />
      <svg viewBox="0 0 16 16" className="w-[14px] h-[14px]">
        <circle cx="8" cy="9" r="6.5" fill="#19a0b8" />
        <path d="M8 2l6 3-4 4z" fill="#c8302c" />
        <path d="M3 6l4 2-2 5z" fill="#e2e8c0" />
      </svg>
      <svg viewBox="0 0 16 16" className="w-[12px] h-[12px] ml-[12px]">
        <path d="M1 1h14v14H1z" fill="#bcd0e4" stroke="#445" />
        <path d="M4 4h8v8H4z" fill="#eef" stroke="#2f5fc4" />
      </svg>
    </div>
  );
}

function Viewport() {
  return (
    <div className="w-[680px] shrink-0 bg-gradient-to-b from-[#23285c] via-[#134c7c] to-[#0a6d96]">
      <svg viewBox="150 252 680 360" className="w-full h-full">
        <defs>
          <radialGradient id="body" cx="0.5" cy="0.8" r="0.65">
            <stop offset="0" stopColor="#555" />
            <stop offset="1" stopColor="#c8c8c8" />
          </radialGradient>
          <radialGradient id="halo">
            <stop offset="0" stopColor="#1c8a8c" />
            <stop offset="0.6" stopColor="#13807f" stopOpacity="0.7" />
            <stop offset="1" stopColor="#0c7090" stopOpacity="0" />
          </radialGradient>
        </defs>
        <path d="M490 373L631 372V392L490 398Z" fill="#ff00ff" />
        <path d="M488 398L511 394L543 392L557 390L591 389L606 387L628 385L632 390V450Q565 410 489 451Z" fill="url(#body)" />
        <path d="M488 386L497 386L497 396L488 397Z" fill="#fff" />
        <path d="M511 385L543 382L543 392L511 394Z" fill="#fff" />
        <path d="M557 381L591 379L591 390L557 391Z" fill="#fff" />
        <path d="M606 378L628 377L628 387L606 388Z" fill="#fff" />
        <path d="M488 398L511 394L543 392L557 391L591 390L606 388L628 386" fill="none" stroke="#3b2050" />
        <ellipse cx="503" cy="404" rx="4" ry="6" fill="#0d6a18" />
        <ellipse cx="548" cy="403" rx="4" ry="7" fill="#0d6a18" />
        <ellipse cx="593" cy="402" rx="4" ry="7" fill="#0d6a18" />
        <path d="M489 451Q565 410 631 448V482L490 484Z" fill="#ff00ff" stroke="#4a1a5a" strokeWidth="1" />
        <path d="M491 483L631 482V497L491 498Z" fill="#0a5a10" />
        <path d="M628 380L632 382L631 483L629 483Z" fill="#22c022" />
        <path d="M490 460V495" stroke="#d8f0d8" strokeWidth="1.6" />
        <circle cx="535" cy="470.5" r="5.5" fill="#28e028" stroke="#1a6a1a" />
        <circle cx="535" cy="470.5" r="2.5" fill="#0d5a18" />
        <circle cx="508" cy="378" r="3" fill="#a06a20" stroke="#1a6a1a" />
        <circle cx="614" cy="469" r="3" fill="#a06a20" stroke="#1a6a1a" />
        <path d="M563 303L560 268" stroke="#1a35b0" strokeWidth="2" />
        <path d="M564 304H652" stroke="#3a9a3a" strokeWidth="1.2" />
        <path d="M634 302L652 303L634 305Z" fill="#3a9a3a" />
        <path d="M563.5 304V380" stroke="#d84848" strokeWidth="1.6" />
        <path d="M561 366H566L563.5 378Z" fill="#e03838" />
        <path d="M445 500H486" stroke="#c82828" strokeWidth="2" />
        <path d="M491 503L492 522" stroke="#1a35c0" strokeWidth="2.4" />
        <g fontFamily="'Liberation Sans',sans-serif" fontSize="11">
          <text x="561" y="263" fill="#1a35b0">ZM</text>
          <text x="636" y="300" fill="#46a446">YM</text>
          <text x="567" y="391" fill="#b85858">XM</text>
          <text x="473" y="456" fill="#2f9a56">YC</text>
          <text x="442" y="512" fill="#b03030">XC</text>
          <text x="480" y="530" fill="#1a35c0">ZC</text>
        </g>
        <circle cx="706" cy="497" r="22" fill="url(#halo)" />
        <circle cx="706" cy="497" r="6.5" fill="none" stroke="#d8f4f4" strokeWidth="2" strokeDasharray="34 7" transform="rotate(-10 706 497)" />
        <path d="M700.5 500.5A6.5 6.5 0 0 0 712 500" fill="none" stroke="#58d8e0" strokeWidth="2" />
        <path d="M178 577V601" stroke="#c83030" strokeWidth="1.4" />
        <path d="M178 576H200" stroke="#2f9a56" strokeWidth="1" />
        <path d="M171 570H186V584H171Z" fill="#9aa4a8" />
        <path d="M175 574H182V581H175Z" fill="#c8cccc" />
      </svg>
    </div>
  );
}

type NavRow = {
  indent: string;
  exp?: boolean;
  mark?: "check" | "no";
  k?: string;
  label: string;
  cn?: boolean;
  tone?: string;
  tool?: string;
  st?: "x" | "ok";
  sel?: boolean;
  stub?: string;
};

const OP = "text-[#1d6a7a]";
const CUT = "text-[#2530b0]";
const GRP = "text-[#1d3f7a]";

const navRows: NavRow[] = [
  { indent: "pl-[3px]", label: "NC_PROGRAM" },
  { indent: "pl-[17px]", k: "folder", label: "未用项", cn: true, stub: "left-[9px] w-[7px]" },
  { indent: "pl-[15px]", mark: "check", k: "folder", label: "PROGRAM", stub: "left-[9px] w-[7px]" },
  { indent: "pl-[4px]", exp: true, mark: "no", k: "folder", label: "1" },
  { indent: "pl-[32px]", mark: "no", k: "opMill", label: "CAVITY_MILL_1", tone: OP, tool: "---", st: "x", stub: "left-[26px] w-[6px]" },
  { indent: "pl-[32px]", mark: "no", k: "opFix", label: "FIXED_CONTOUR", tone: OP, tool: "---", st: "x", stub: "left-[26px] w-[6px]" },
  { indent: "pl-[32px]", mark: "no", k: "opFace", label: "FACE_MILLING", tone: OP, tool: "---", st: "x", stub: "left-[26px] w-[6px]" },
  { indent: "pl-[32px]", mark: "no", k: "opFace", label: "FACE_MILLING_AREA", tone: OP, tool: "---", st: "x", stub: "left-[26px] w-[6px]" },
  { indent: "pl-[32px]", mark: "no", k: "opPlane", label: "PLANAR_PROFILE_1", tone: OP, tool: "---", st: "x", stub: "left-[26px] w-[6px]" },
  { indent: "pl-[20px]", exp: true, mark: "check", k: "folder", label: "D08660_C202_B-1", sel: true },
  { indent: "pl-[48px]", mark: "check", k: "opMill", label: "ZLEVEL_PROFILE_C...", tone: CUT, tool: "D12-30", st: "ok", stub: "left-[41px] w-[7px]" },
  { indent: "pl-[20px]", exp: true, mark: "check", k: "folder", label: "D08660_C202_B-2", tone: GRP },
  { indent: "pl-[48px]", mark: "check", k: "opMill", label: "ZLEVEL_PROFILE_C...", tone: CUT, tool: "12R0.05", st: "ok", stub: "left-[41px] w-[7px]" },
  { indent: "pl-[20px]", exp: true, mark: "check", k: "folder", label: "D08660_C202_B-3", tone: GRP },
  { indent: "pl-[48px]", mark: "check", k: "opPlane", label: "PLANAR_MILL", tone: CUT, tool: "D8-40", st: "ok", stub: "left-[41px] w-[7px]" },
];

const navIcons: Record<string, ReactNode> = {
  folder: (<><path d="M1 3h6l1 2h7v10H1z" fill="#f0e4a8" stroke="#a08a40" /><rect x="8" y="7" width="6" height="6" fill="#fff" stroke="#3a4f9c" /><path d="M9 9h4M9 11h4" stroke="#3a4f9c" /></>),
  opMill: (<><path d="M2 3h4v8l7 3v2H5l-3-4z" fill="#1d5a6a" /><rect x="8" y="1" width="5" height="6" fill="#4060c0" /></>),
  opFix: (<><circle cx="8" cy="10" r="5.5" fill="#fff" stroke="#333" /><rect x="7" y="1" width="4" height="8" fill="#4050b0" /></>),
  opFace: (<><path d="M2 6l7-3 6 3v6l-6 3-7-3z" fill="#9ca0a8" stroke="#555" /><rect x="3" y="1" width="5" height="5" fill="#6a7a9a" /></>),
  opPlane: (<><path d="M2 2v13h13" fill="none" stroke="#222" /><path d="M6 2v8M9 4v6" stroke="#3040c0" strokeWidth="2" /><path d="M11 5h4M11 8h4" stroke="#3040c0" /></>),
};

function NavMark({ m }: { m?: "check" | "no" }) {
  if (m === "no") {
    return (
      <svg viewBox="0 0 16 16" className="w-[14px] h-[14px] shrink-0">
        <circle cx="8" cy="8" r="6" fill="none" stroke="#d2232a" strokeWidth="2" />
        <path d="M3.8 12L12 3.8" stroke="#d2232a" strokeWidth="2" />
      </svg>
    );
  }
  if (m === "check") {
    return (
      <svg viewBox="0 0 16 16" className="w-[14px] h-[14px] shrink-0">
        <path d="M2 9l2-2 3 3 6-7 2 2-8 9z" fill="#2a9a3a" />
      </svg>
    );
  }
  return null;
}

function NavRowView({ r, i }: { r: NavRow; i: number }) {
  const selBg = r.sel ? "bg-[#3390e8]" : "";
  return (
    <div className={`h-[17px] shrink-0 flex items-center relative ${i % 2 ? "bg-[#f6f6f6]" : "bg-white"}`}>
      {r.stub && <div className={`absolute top-[8px] border-t border-dotted border-[#999] ${r.stub}`} />}
      <div className={`w-[179px] shrink-0 h-full flex items-center overflow-hidden ${r.indent}`}>
        {r.exp && (
          <div className="w-[8px] h-[8px] shrink-0 relative z-10 bg-white border border-[#999] rounded-[1px] mr-[4px] flex items-center justify-center">
            <div className="w-[4px] h-px bg-[#555]" />
          </div>
        )}
        <NavMark m={r.mark} />
        {r.k && (
          <svg viewBox="0 0 16 16" className="w-[13px] h-[13px] shrink-0">
            {navIcons[r.k]}
          </svg>
        )}
        <span
          className={`ml-[1px] h-full flex flex-1 items-center whitespace-nowrap pl-[1px] ${
            r.cn ? "text-[10px] text-[#333]" : "font-['Liberation_Mono',monospace] text-[9px] tracking-[-0.35px]"
          } ${r.sel ? "bg-[#3390e8] text-white" : r.tone ?? "text-[#222]"}`}
        >
          {r.label}
        </span>
      </div>
      <div className={`w-[2px] h-full shrink-0 ${r.sel ? "bg-[#2f6ab0]" : "bg-[#7c7c7c]"}`} />
      <div className={`flex-1 h-full flex items-center pl-[2px] font-['Liberation_Mono',monospace] text-[9px] tracking-[-0.3px] text-[#2a3050] ${selBg}`}>
        {r.tool}
      </div>
      <div className={`w-[14px] h-full shrink-0 flex items-center justify-center ${selBg}`}>
        {r.st === "x" && (
          <svg viewBox="0 0 12 12" className="w-[11px] h-[11px] shrink-0">
            <path d="M1.5 1.5l9 9M10.5 1.5l-9 9" stroke="#111" strokeWidth="2" />
          </svg>
        )}
        {r.st === "ok" && <NavMark m="check" />}
      </div>
    </div>
  );
}

function Accordion({ label }: { label: string }) {
  return (
    <div className="h-[19px] flex items-center border-b border-[#b8b8b8] bg-gradient-to-b from-[#f4f4f4] to-[#dcdcdc]">
      <span className="flex-1 pl-[5px] text-[11px] font-bold text-[#222]">{label}</span>
      <div className="w-[19px] h-full flex items-center justify-center border-l border-[#c4c4c4]">
        <svg viewBox="0 0 12 12" className="w-[12px] h-[12px]">
          <path d="M2 3l4 5 4-5" fill="none" stroke="#555" strokeWidth="2.2" />
        </svg>
      </div>
    </div>
  );
}

function Navigator() {
  return (
    <div className="w-[270px] shrink-0 bg-[#f1f3f3] flex flex-col pl-[8px] pr-[7px]">
      <div className="h-[30px] shrink-0 flex items-center pl-[5px] pr-[9px] pt-[5px]">
        <span className="flex-1 text-[11px] font-bold text-[#222] whitespace-pre">工序导航器  -  程序顺序</span>
        <svg viewBox="0 0 12 12" className="w-[11px] h-[11px]">
          <path d="M4 3l4-2 3 3-2 4-2-1-4 4 2-5z" fill="#333" />
        </svg>
      </div>
      <div className="h-[274px] shrink-0 border border-[#a8a8a8] flex flex-col bg-white">
        <div className="h-[14px] shrink-0 flex items-center bg-gradient-to-b from-[#f0f0f0] to-[#dadada] border-b border-[#b8b8b8] text-[10px] text-[#333]">
          <span className="w-[179px] shrink-0 pl-[5px]">名称</span>
          <span className="w-[2px] h-full shrink-0 bg-[#7c7c7c]" />
          <span className="w-[44px] shrink-0 pl-[3px]">刀具</span>
          <span className="w-[18px] shrink-0 border-l border-[#c8c8c8] pl-[2px]">工</span>
          <span className="flex-1 border-l border-[#c8c8c8] pl-[2px] overflow-hidden">余</span>
        </div>
        <div className="flex flex-1 min-h-0">
          <div className="flex flex-col w-[239px] shrink-0 overflow-hidden relative">
            {navRows.map((r, i) => (
              <NavRowView key={r.label + i} r={r} i={i} />
            ))}
            <div className="absolute left-[8px] top-[12px] bottom-0 border-l border-dotted border-[#aaa]" />
            <div className="absolute left-[25px] top-[68px] h-[85px] border-l border-dotted border-[#aaa]" />
            <div className="absolute left-[40px] top-[170px] h-[70px] border-l border-dotted border-[#aaa]" />
          </div>
          <div className="flex-1 bg-[#f4f4f4] flex flex-col items-center pt-[5px]">
            <span className="w-0 h-0 border-x-[3px] border-b-[3px] border-x-transparent border-b-[#555]" />
            <div className="w-[11px] h-[18px] mt-[5px] border border-[#bbb] rounded-[2px] bg-gradient-to-b from-[#f8f8f8] to-[#dcdcdc] flex flex-col justify-center gap-px px-[3px]">
              <i className="h-px bg-[#999]" />
              <i className="h-px bg-[#999]" />
              <i className="h-px bg-[#999]" />
            </div>
          </div>
        </div>
        <div className="h-[13px] shrink-0 flex items-center bg-[#f0f0f0] border-t border-[#ddd] pl-[6px]">
          <span className="w-0 h-0 border-y-[3px] border-r-[3px] border-y-transparent border-r-[#444]" />
          <div className="w-[88px] h-full ml-[4px] border border-[#bbb] rounded-[2px] bg-gradient-to-b from-[#f8f8f8] to-[#dcdcdc] flex items-center justify-center text-[8px] text-[#666]">
            III
          </div>
          <span className="ml-auto mr-[21px] w-0 h-0 border-y-[3px] border-l-[3px] border-y-transparent border-l-[#444]" />
        </div>
      </div>
      <div className="h-[11px] shrink-0 flex items-center justify-center">
        <div className="w-[46px] h-[4px] bg-[#c8c8c8] border border-[#bbb]" />
      </div>
      <div className="border border-b-0 border-[#c0c0c0] mr-px">
        <Accordion label="相依性" />
        <Accordion label="细节" />
      </div>
    </div>
  );
}

const tabsTop = [
  { k: "tabComp", cls: "h-[33px] mt-[14px]" },
  { k: "constrain", cls: "h-[34px] mt-[2px]" },
  { k: "tabFolder", cls: "h-[34px] mt-[1px]" },
];
const tabsBottom = [
  { k: "tabGrid", cls: "h-[34px]" },
  { k: "tabDoc", cls: "h-[33px] mt-[2px]" },
  { k: "tabBooks", cls: "h-[33px] mt-[3px]" },
];

function TabStrip() {
  return (
    <div className="flex-1 bg-gradient-to-b from-[#c4c4c4] via-[#a0a0a0] to-[#8c8c8c] flex flex-col pl-[2px]">
      {tabsTop.map((t) => (
        <div key={t.k} className={`w-[22px] shrink-0 flex items-center justify-center rounded-r-[3px] border border-l-0 border-[#999] bg-[#dedede] ${t.cls}`}>
          <Ico k={t.k} className="w-[18px] h-[18px]" />
        </div>
      ))}
      <div className="w-[25px] -ml-[2px] h-[36px] shrink-0 flex items-center justify-center rounded-r-[3px] bg-[#f3f4f4]">
        <Ico k="tabOps" className="w-[18px] h-[18px]" />
      </div>
      {tabsBottom.map((t) => (
        <div key={t.k} className={`w-[22px] shrink-0 flex items-center justify-center rounded-r-[3px] border border-l-0 border-[#999] bg-[#dedede] ${t.cls}`}>
          <Ico k={t.k} className="w-[18px] h-[18px]" />
        </div>
      ))}
      <div className="w-[22px] h-[29px] shrink-0 mt-[13px] flex items-end justify-center rounded-t-[6px] bg-[#c8c8c8] border border-b-0 border-[#999]">
        <Ico k="tabFeed" className="w-[20px] h-[20px]" />
      </div>
      <div className="flex flex-col items-center w-[20px] ml-[1px] bg-[#c0c0c0]">
        {["M2 3h8M3 9l3-3 3 3", "M3 8l3-3 3 3", "M3 5l3 3 3-3", "M2 9h8M3 3l3 3 3-3"].map((d) => (
          <div key={d} className="w-[14px] h-[13px] border border-[#aaa] bg-[#dedede] flex items-center justify-center">
            <svg viewBox="0 0 12 12" className="w-[9px] h-[9px]">
              <path d={d} fill="none" stroke="#555" strokeWidth="1.5" />
            </svg>
          </div>
        ))}
      </div>
    </div>
  );
}

function Bottom() {
  return (
    <div className="flex-1 bg-[#dbdbdb] flex flex-col min-h-0">
      <div className="h-[52px] shrink-0 flex bg-[#d9d9d9]">
        <div className="w-[656px] shrink-0 h-full flex items-center bg-[#e4e4e4] border-b border-[#cacaca]">
          <div className="w-[47px] h-[50px] shrink-0 bg-white border border-[#aaa] rounded-[2px] flex flex-col items-center pt-[2px] pr-[3px]">
            <Ico k="prog" className="w-[24px] h-[24px]" />
            <div className="mt-[1px] text-[10px] leading-[10px] text-center text-[#333] whitespace-nowrap">
              程序顺序
              <br />
              视图
            </div>
          </div>
          <Big k="machine" lines={["机床视图"]} className="w-[50px]" />
          <Big k="geo" lines={["几何视图"]} className="w-[50px]" />
          <Big k="method" lines={["加工方法", "视图"]} className="w-[52px]" />
          <Caret className="mt-[40px] ml-[1px]" />
          <Sep className="ml-[5px] h-full" />
          <Grip className="ml-[34px]" />
          <Big k="draft" lines={["拔模分析"]} className="w-[50px] ml-[2px]" caret />
          <div className="w-[10px]" />
          <div className="w-[50px] shrink-0 h-full flex flex-col items-center pt-[3px]">
            <Ico k="waveLink" className="w-[24px] h-[24px]" />
            <div className="mt-[2px] text-[10px] leading-[10px] text-center text-[#333] whitespace-nowrap">
              <span className="font-['Liberation_Mono',monospace] text-[8px] font-bold">WAVE</span> 几
              <br />
              何链接器
            </div>
          </div>
          <Big k="plus" lines={["点(P)..."]} className="w-[50px] ml-[2px]" caret />
          <div className="w-[11px]" />
          <Big k="curve" lines={["复合曲线", "(U)..."]} className="w-[50px]" caret />
          <div className="w-[9px]" />
          <Big k="patch" lines={["修补开口", "(P)..."]} className="w-[50px]" />
          <Big k="sync" lines={["同步建模", "工具条"]} className="w-[51px]" />
          <Big k="facet" lines={["小平面化", "(C)..."]} className="w-[51px]" caret />
          <Caret className="mt-[40px] ml-[14px]" />
        </div>
      </div>
      <div className="h-[52px] shrink-0 flex bg-[#dbdbdb]">
        <div className="w-[557px] shrink-0 h-full flex items-center bg-[#dedede] overflow-hidden">
          <div className="-ml-[4px] h-full flex">
            <Big k="setWork" lines={["设置工作", "部件"]} caret />
          </div>
          <div className="w-[11px] shrink-0" />
          <Big k="addComp" lines={["添加组件"]} caret />
          <div className="w-[10px] shrink-0" />
          <Big k="moveComp" lines={["移动组件"]} />
          <Big k="constrain" lines={["装配约束"]} className="w-[51px]" />
          <Big k="showHide" lines={["显示和隐", "藏约束"]} />
          <Sep className="ml-[5px] h-full" />
          <Big k="layout" lines={["装配布置"]} className="w-[50px] ml-[2px]" />
          <Big k="yellowTri" lines={["爆炸图"]} />
          <Big k="seq" lines={["装配序列"]} />
          <Sep className="ml-[5px] h-full" />
          <Big k="browser" lines={["关系浏览", "器"]} />
          <Sep className="ml-[5px] h-full" />
          <Big k="clear" lines={["装配间隙"]} className="w-[52px]" />
          <Caret className="mb-[14px]" />
          <Caret className="mt-[36px] ml-[2px]" />
        </div>
      </div>
      <div className="h-[4px] shrink-0 bg-[#141414]" />
    </div>
  );
}

export default function App() {
  return (
    <div className="w-[1280px] h-[720px] bg-black flex justify-center overflow-hidden blur-[0.35px] font-['Liberation_Sans','Noto_Sans_CJK_SC',sans-serif]">
      <div className="w-[980px] h-full flex flex-col bg-[#d6d6d6]">
        <div className="h-[16px] shrink-0 bg-[#131313] flex items-start text-[#d8d8d8] overflow-hidden">
          <span className="ml-[9px] -mt-[4px] text-[11px] whitespace-pre">NX 8 - 加工 - [D08660_C205-B-JX.prt （修改的）]</span>
          <span className="ml-auto -mt-[3px] text-[11px] font-bold tracking-[0.4px] text-white">SIEMENS</span>
          <div className="ml-[24px] mr-[2px] flex gap-[3px]">
            <div className="w-[15px] h-[11px] bg-[#6a6a6a] rounded-b-[2px] flex items-end justify-center pb-[2px]">
              <div className="w-[6px] h-[2px] bg-white" />
            </div>
            <div className="w-[15px] h-[11px] bg-[#6a6a6a] rounded-b-[2px] flex items-center justify-center">
              <div className="w-[8px] h-[7px] border border-white" />
            </div>
            <div className="w-[16px] h-[11px] bg-[#d8583a] rounded-b-[2px] flex items-center justify-center text-white text-[11px] leading-[11px] font-bold">
              ×
            </div>
          </div>
        </div>
        <MenuBar />
        <Row1 />
        <Row2 />
        <Row3 />
        <Row4 />
        <Row5 />
        <Row6 />
        <Status />
        <div className="h-[360px] shrink-0 flex">
          <Viewport />
          <Navigator />
          <TabStrip />
        </div>
        <Bottom />
      </div>
    </div>
  );
}
